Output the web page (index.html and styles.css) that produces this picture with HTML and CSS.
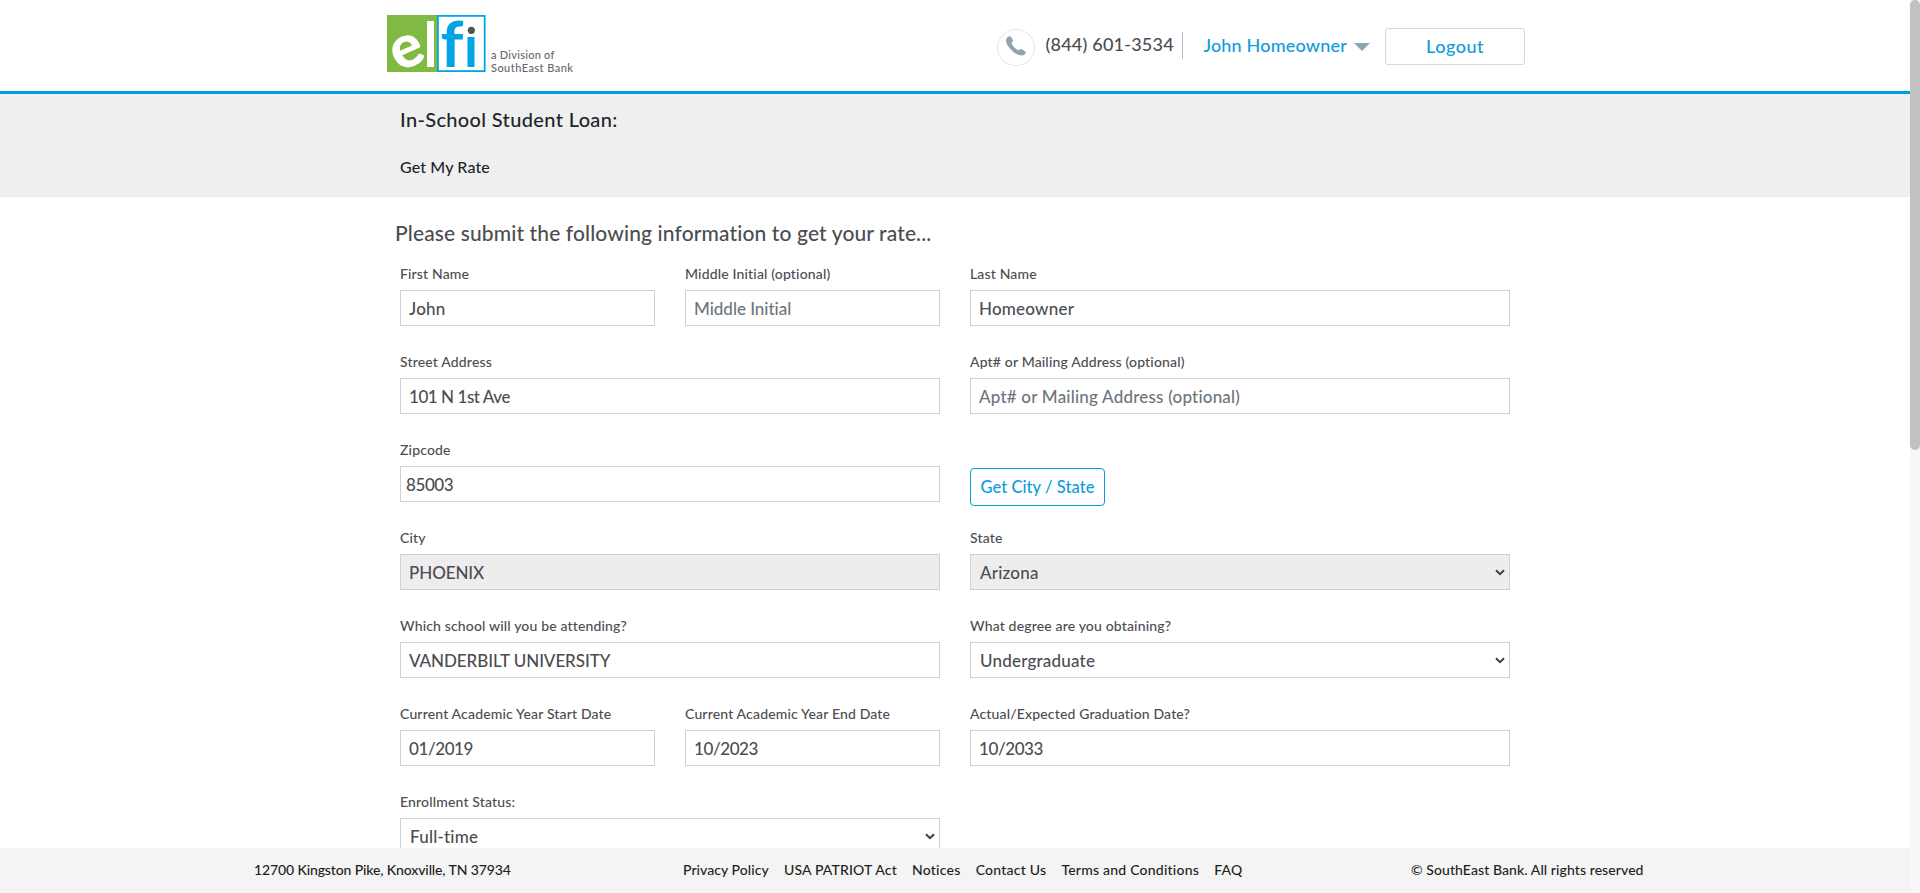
FILE: index.html
```html
<!DOCTYPE html>
<html lang="en">
<head>
<meta charset="utf-8">
<title>ELFI - Get My Rate</title>
<link rel="stylesheet" href="styles.css">
</head>
<body>
<div class="page">
  <header class="header">
    <div class="container header-row">
      <a class="brand" href="#">
        <svg class="logo" width="99" height="57" viewBox="0 0 99 57" role="img" aria-label="elfi">
          <rect width="50.5" height="57" fill="#80ba42"/>
          <rect x="50.9" y=".9" width="46.8" height="55.2" fill="#fff" stroke="#00a5e3" stroke-width="1.8"/>
          <text class="logo-e" text-anchor="middle" y="14.500" transform="translate(20.5 37.5) rotate(-24)">e</text>
          <rect x="40" y="6" width="7" height="46" fill="#fff"/>
          <text class="logo-f" x="53.5" y="52">f</text>
          <rect x="80.500" y="22" width="7" height="30" fill="#00a5e3"/>
          <circle cx="84.3" cy="15.3" r="3.6" fill="#54565b"/>
        </svg>
        <span class="tagline">a Division of<br><span class="bank">SouthEast Bank</span></span>
      </a>
      <div class="account">
        <span class="phone-icon">
          <svg width="20" height="20" viewBox="0 0 20 20"><path d="M1.2 1.6Q3-.3 4.8.6L7 4.2Q7.3 5.4 5.8 6.4Q5.3 8.5 8.3 11.5Q11.3 14.3 13.3 13.9Q14.3 12.6 15.6 13L19.3 15.6Q20.2 17.4 18.3 18.8Q14.4 21 8 16.4Q-1.400 9 .3 3Z" fill="#90a4ae"/></svg>
        </span>
        <span class="phone">(844) 601-3534</span>
        <a class="user" href="#">John Homeowner</a>
        <a class="logout" href="#">Logout</a>
      </div>
    </div>
  </header>
  <section class="banner">
    <div class="container banner-text">
      <h1>In-School Student Loan:</h1>
      <p>Get My Rate</p>
    </div>
  </section>
  <main class="container main">
    <h2>Please submit the following information to get your rate...</h2>
    <form class="form">
      <div class="field"><label>First Name</label><input class="control" value="John"></div>
      <div class="field"><label>Middle Initial (optional)</label><input class="control middle" placeholder="Middle Initial"></div>
      <div class="field wide"><label>Last Name</label><input class="control" value="Homeowner"></div>
      <div class="field wide"><label>Street Address</label><input class="control street" value="101 N 1st Ave"></div>
      <div class="field wide"><label>Apt# or Mailing Address (optional)</label><input class="control" placeholder="Apt# or Mailing Address (optional)"></div>
      <div class="field wide"><label>Zipcode</label><input class="control zip digits" value="85003"></div>
      <div class="field wide"><button class="lookup" type="button">Get City / State</button></div>
      <div class="field wide"><label>City</label><input class="control locked caps" value="PHOENIX" readonly></div>
      <div class="field wide"><label>State</label><div class="control select locked"><span>Arizona</span><svg class="chevron" width="10" height="7" viewBox="0 0 10 7"><path d="M1 1.200 5 5.200 9 1.200"/></svg></div></div>
      <div class="field wide"><label>Which school will you be attending?</label><input class="control caps" value="VANDERBILT UNIVERSITY"></div>
      <div class="field wide"><label>What degree are you obtaining?</label><div class="control select"><span>Undergraduate</span><svg class="chevron" width="10" height="7" viewBox="0 0 10 7"><path d="M1 1.200 5 5.200 9 1.200"/></svg></div></div>
      <div class="field"><label>Current Academic Year Start Date</label><input class="control digits" value="01/2019"></div>
      <div class="field"><label>Current Academic Year End Date</label><input class="control digits" value="10/2023"></div>
      <div class="field wide"><label>Actual/Expected Graduation Date?</label><input class="control digits" value="10/2033"></div>
      <div class="field wide"><label>Enrollment Status:</label><div class="control select"><span>Full-time</span><svg class="chevron" width="10" height="7" viewBox="0 0 10 7"><path d="M1 1.200 5 5.200 9 1.200"/></svg></div></div>
    </form>
  </main>
</div>
<footer class="footer">
  <span class="address">12700 Kingston Pike, Knoxville, TN 37934</span>
  <nav class="links">
    <a class="privacy" href="#">Privacy Policy</a><a class="patriot" href="#">USA PATRIOT Act</a><a href="#">Notices</a><a href="#">Contact Us</a><a href="#">Terms and Conditions</a><a href="#">FAQ</a>
  </nav>
  <span class="copyright">© SouthEast Bank. All rights reserved</span>
</footer>
<div class="scrollbar"><div class="thumb"></div></div>
</body>
</html>
```
FILE: styles.css
```css
* { box-sizing: border-box; }
html, body { height: 100%; }
body {
  margin: 0;
  overflow: hidden;
  font-family: Lato, "Open Sans", sans-serif;
  font-weight: 500;
  font-variant-ligatures: none;
  color: #4c4d52;
  background: #fff;
}
a { color: inherit; text-decoration: none; }
h1, h2, p { margin: 0; font-weight: 500; }
.page { width: 1910px; height: 893px; overflow: hidden; }
.container { width: 1140px; margin: 0 auto; }

.header { height: 94px; border-bottom: 3px solid #009fdc; }
.header-row { display: flex; justify-content: space-between; }
.brand { display: flex; padding: 15px 0 0 2px; }
.logo { overflow: visible; }
.logo-e { font: 900 60px Lato, sans-serif; fill: #fff; }
.logo-f { font: 700 64px Lato, sans-serif; fill: #00a5e3; }
.tagline {
  padding: 33px 0 0 5px;
  font-size: 11px;
  line-height: 13px;
  letter-spacing: .26px;
  color: #66676c;
}
.bank { letter-spacing: .45px; }
.account { display: flex; align-items: flex-start; font-size: 18px; line-height: 22px; }
.phone-icon {
  display: flex;
  align-items: center;
  justify-content: center;
  width: 38px;
  height: 37px;
  margin-top: 29px;
  padding-bottom: 3px;
  border: 1px solid #e2e4e6;
  border-radius: 50%;
}
.phone {
  width: 138px;
  height: 27px;
  margin: 32px 20px 0 10px;
  padding-top: 1px;
  border-right: 1px solid #b4c0c5;
  letter-spacing: .22px;
}
.user {
  display: flex;
  align-items: center;
  gap: 7px;
  margin: 34px 15px 0 0;
  color: #109bdc;
  letter-spacing: .19px;
}
.user::after {
  content: "";
  border: 8px solid transparent;
  border-top-color: #90a4ae;
  border-bottom: 0;
  margin-top: 4px;
}
.logout {
  width: 140px;
  height: 37px;
  margin-top: 28px;
  border: 1px solid #d5d9db;
  border-radius: 3px;
  color: #109bdc;
  letter-spacing: .5px;
  line-height: 34px;
  text-align: center;
}

.banner { height: 103px; background: #efefef; border-bottom: 1px solid #e9e9e9; color: #212529; }
.banner-text { padding: 13px 15px 0; }
.banner h1 { font-size: 20px; line-height: 24px; letter-spacing: .35px; }
.banner p { margin-top: 25px; font-size: 16px; line-height: 22px; letter-spacing: .12px; }

.main { padding: 23px 10px 0; }
.main h2 { font-size: 21px; line-height: 26px; letter-spacing: .12px; }
.form {
  display: grid;
  grid-template-columns: repeat(4, 255px);
  grid-auto-rows: 88px;
  column-gap: 30px;
  padding: 18px 5px 0;
}
.wide { grid-column: span 2; }
.field { display: flex; flex-direction: column; }
.field label { height: 26px; font-size: 14px; line-height: 19px; letter-spacing: .16px; }
.control {
  width: 100%;
  height: 36px;
  padding: 0 8px;
  border: 1px solid #cfd0d1;
  border-radius: 0;
  background: #fff;
  font: 500 17px Lato, "Open Sans", sans-serif;
  font-variant-ligatures: none;
  letter-spacing: .21px;
  color: #4c4d52;
}
.control::placeholder { color: #6c757d; opacity: 1; }
.middle { letter-spacing: -.02px; }
.street { letter-spacing: -.45px; }
.digits { letter-spacing: -.42px; }
.caps { letter-spacing: -.08px; }
.zip { padding-left: 5px; }
.locked { background: #ededed; }
.select { display: flex; align-items: center; justify-content: space-between; padding: 0 4px 0 9px; }
.chevron { fill: none; stroke: #3f4044; stroke-width: 2; }
.lookup {
  width: 135px;
  height: 38px;
  margin-top: 28px;
  padding: 0;
  border: 1px solid #009fdc;
  border-radius: 4px;
  background: #fff;
  font: 500 16.5px Lato, "Open Sans", sans-serif;
  letter-spacing: .06px;
  color: #109bdc;
}

.footer {
  position: fixed;
  left: 0;
  bottom: 0;
  width: 1910px;
  height: 45px;
  display: flex;
  padding: 12px 0 0 254px;
  background: #f4f4f4;
  color: #1d1f21;
  font-size: 14px;
  line-height: 19px;
}
.address { width: 429px; letter-spacing: -.12px; }
.links { display: flex; gap: 15.200px; width: 728px; letter-spacing: .22px; }
.privacy { letter-spacing: .06px; }
.patriot { letter-spacing: .15px; }
.copyright { letter-spacing: .08px; }

.scrollbar { position: fixed; top: 0; right: 0; width: 10px; height: 893px; background: #f7f7f7; }
.thumb { height: 450px; border-radius: 5px; background: #c1c1c1; }
```
